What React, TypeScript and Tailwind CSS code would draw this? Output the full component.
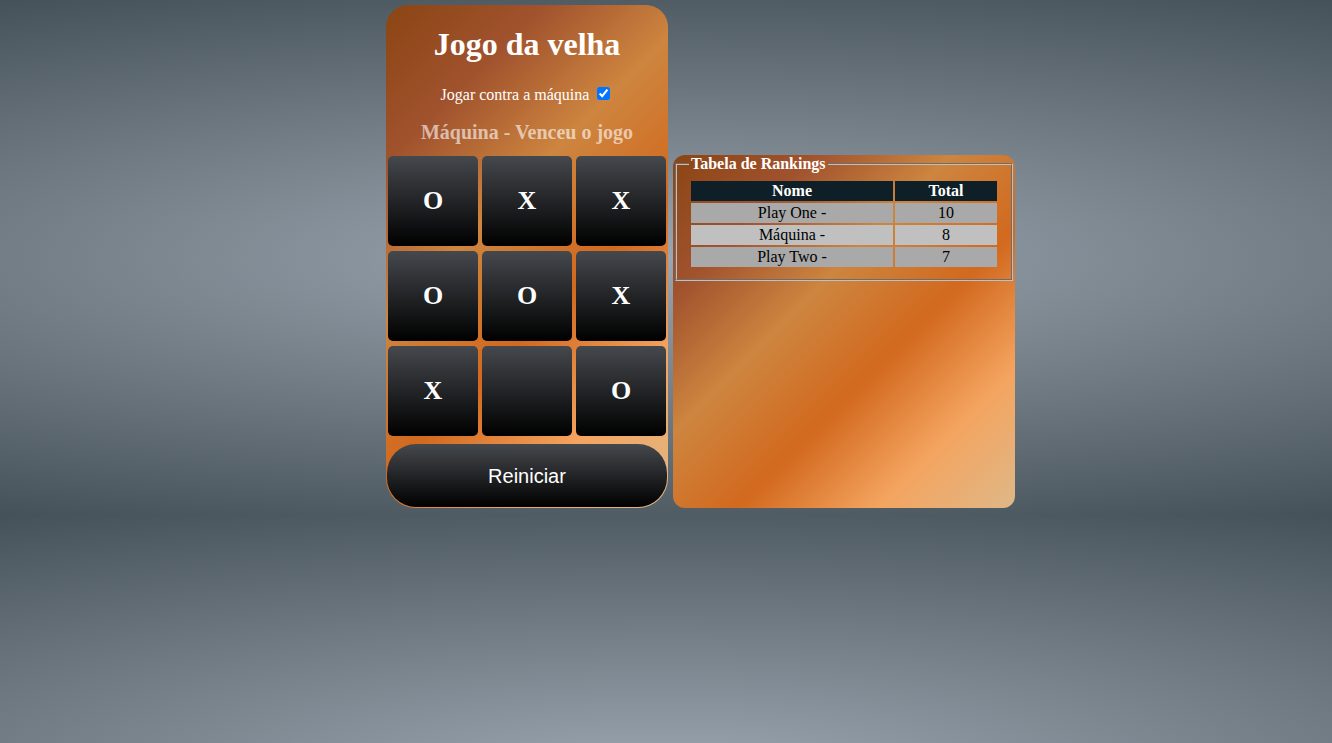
export default function App() {
  const cells = ["O", "X", "X", "O", "O", "X", "X", "", "O"];
  const rows: [string, string, string][] = [
    ["Play One -", "10", "bg-[#a9a9a9]"],
    ["Máquina -", "8", "bg-[#c0c0c0]"],
    ["Play Two -", "7", "bg-[#a9a9a9]"],
  ];
  return (
    <div className="min-h-screen bg-[radial-gradient(1500px_320px_at_50%_50%,#9ca6b0,#3e4a52)] bg-[length:100%_515px] font-['Liberation_Serif','Times_New_Roman',serif]">
      <div className="flex items-end gap-[5px] pl-[386px] pt-[5px]">
        <div className="flex w-[282px] flex-col rounded-t-[22px] rounded-b-[30px] bg-[linear-gradient(135deg,#8b4513,#a0522d,#cd853f,#d2691e,#f4a460,#deb887)]">
          <h1 className="mt-[21px] text-center text-[32px] font-bold leading-[37px] text-white">
            Jogo da velha
          </h1>
          <div className="mt-[23px] flex h-[18px] items-start justify-center text-[16px] leading-[18px] text-white">
            <span>Jogar contra a máquina</span>
            <input
              type="checkbox"
              defaultChecked
              className="ml-[8px] mr-[3px] mt-[1px] h-[13px] w-[13px]"
            />
          </div>
          <h3 className="mt-[17px] text-center text-[20px] font-bold leading-[23px] text-white/60">
            Máquina - Venceu o jogo
          </h3>
          <div className="mt-[12px] grid grid-cols-[repeat(3,90px)] gap-x-[4px] gap-y-[5px] px-[2px]">
            {cells.map((c, i) => (
              <div
                key={i}
                className="flex h-[90px] w-[90px] items-center justify-center rounded-[5px] bg-[linear-gradient(to_bottom,#45484d,#000000)] pb-[1px] text-[26px] font-bold text-white"
              >
                {c}
              </div>
            ))}
          </div>
          <button className="mt-[7px] h-[65px] w-full rounded-[30px] border border-transparent bg-[linear-gradient(to_bottom,#45484d,#000000)] bg-clip-padding font-['Liberation_Sans',Arial,sans-serif] text-[20px] text-white">
            Reiniciar
          </button>
        </div>
        <div className="h-[353px] w-[342px] rounded-[12px] bg-[linear-gradient(135deg,#8b4513,#a0522d,#cd853f,#d2691e,#f4a460,#deb887)]">
          <fieldset className="mx-[2px] px-[12px] pb-[10px] pt-[5.6px] [border:2px_groove_rgb(192,192,192)]">
            <legend className="px-[2px] text-[16px] font-bold leading-[18px] text-white">
              Tabela de Rankings
            </legend>
            <table className="w-full border-separate border-spacing-[2px] text-[16px] leading-[18px]">
              <thead>
                <tr>
                  <th className="h-[20px] w-[202px] bg-[#0f1f28] p-0 text-center font-bold text-white">
                    Nome
                  </th>
                  <th className="h-[20px] bg-[#0f1f28] p-0 text-center font-bold text-white">
                    Total
                  </th>
                </tr>
              </thead>
              <tbody>
                {rows.map(([n, t, bg]) => (
                  <tr key={n}>
                    <td className={`h-[20px] p-0 text-center text-black ${bg}`}>{n}</td>
                    <td className={`h-[20px] p-0 text-center text-black ${bg}`}>{t}</td>
                  </tr>
                ))}
              </tbody>
            </table>
          </fieldset>
        </div>
      </div>
    </div>
  );
}
